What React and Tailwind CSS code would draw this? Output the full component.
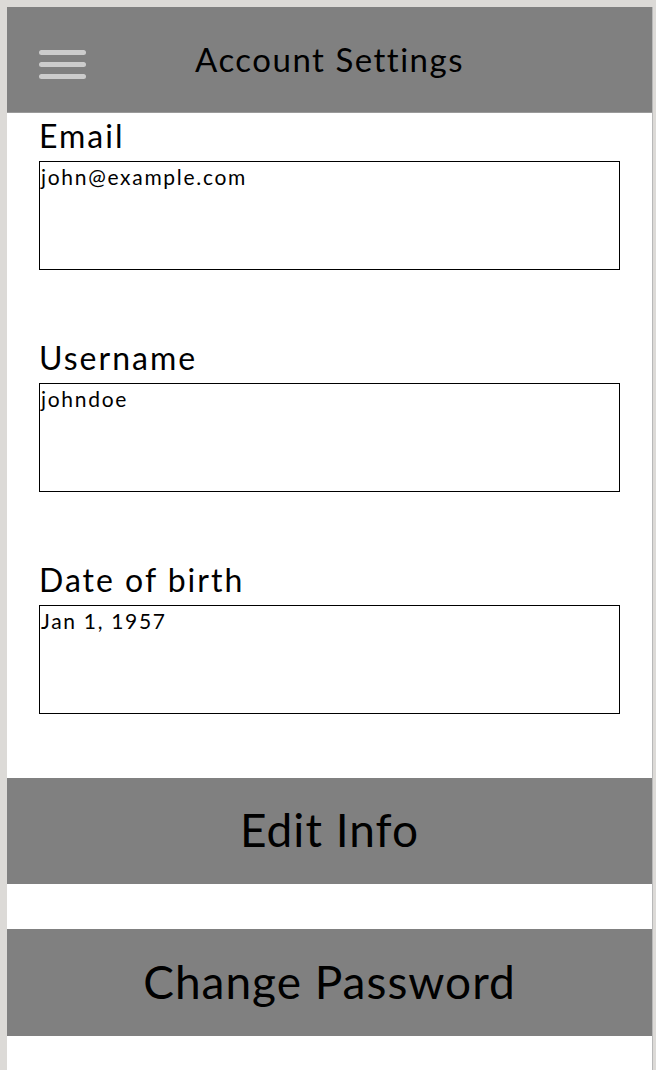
export default function App() {
    const fields = [
        { label: 'Email', value: 'john@example.com' },
        { label: 'Username', value: 'johndoe' },
        { label: 'Date of birth', value: 'Jan 1, 1957' },
    ]

    return (
        <div className="min-h-screen bg-[#dcdad7] pt-[7px] pl-[7px] pr-[3px]" style={{ fontFamily: "Lato, 'Noto Sans', sans-serif" }}>
            <div className="bg-white min-h-[1063px] text-black border-r border-[#b8b8b8]">
                {/* Header */}
                <div className="h-[106px] bg-[#808080] flex items-center relative border-b border-[#9a9a9a]">
                    <div className="absolute left-[32px] top-[43px] flex flex-col gap-[7px]">
                        <span className="block w-[47px] h-[5px] rounded-full bg-[#cccccc]"></span>
                        <span className="block w-[47px] h-[5px] rounded-full bg-[#cccccc]"></span>
                        <span className="block w-[47px] h-[5px] rounded-full bg-[#cccccc]"></span>
                    </div>
                    <h1 className="w-full text-center text-[33px] tracking-[1.5px] leading-none">Account Settings</h1>
                </div>

                {/* Fields */}
                <div className="pl-[32px] pr-[32px]">
                    {fields.map((f, i) => (
                        <div key={i} className={i === fields.length - 1 ? 'mb-[64px]' : 'mb-[65px]'}>
                            <div className="h-[48px] flex items-end pb-[9px]">
                                <span className="text-[32px] tracking-[2px] leading-none">{f.label}</span>
                            </div>
                            <div className="h-[109px] border border-black px-[1px] text-[21px] tracking-[1.7px] leading-[30px]">
                                {f.value}
                            </div>
                        </div>
                    ))}
                </div>

                {/* Buttons */}
                <button className="w-full h-[106px] bg-[#808080] text-[46px] tracking-[1px] flex items-center justify-center pb-[3px]">
                    Edit Info
                </button>
                <div className="h-[45px]"></div>
                <button className="w-full h-[107px] bg-[#808080] text-[46px] tracking-[1px] flex items-center justify-center pb-[3px]">
                    Change Password
                </button>
            </div>
        </div>
    )
}
